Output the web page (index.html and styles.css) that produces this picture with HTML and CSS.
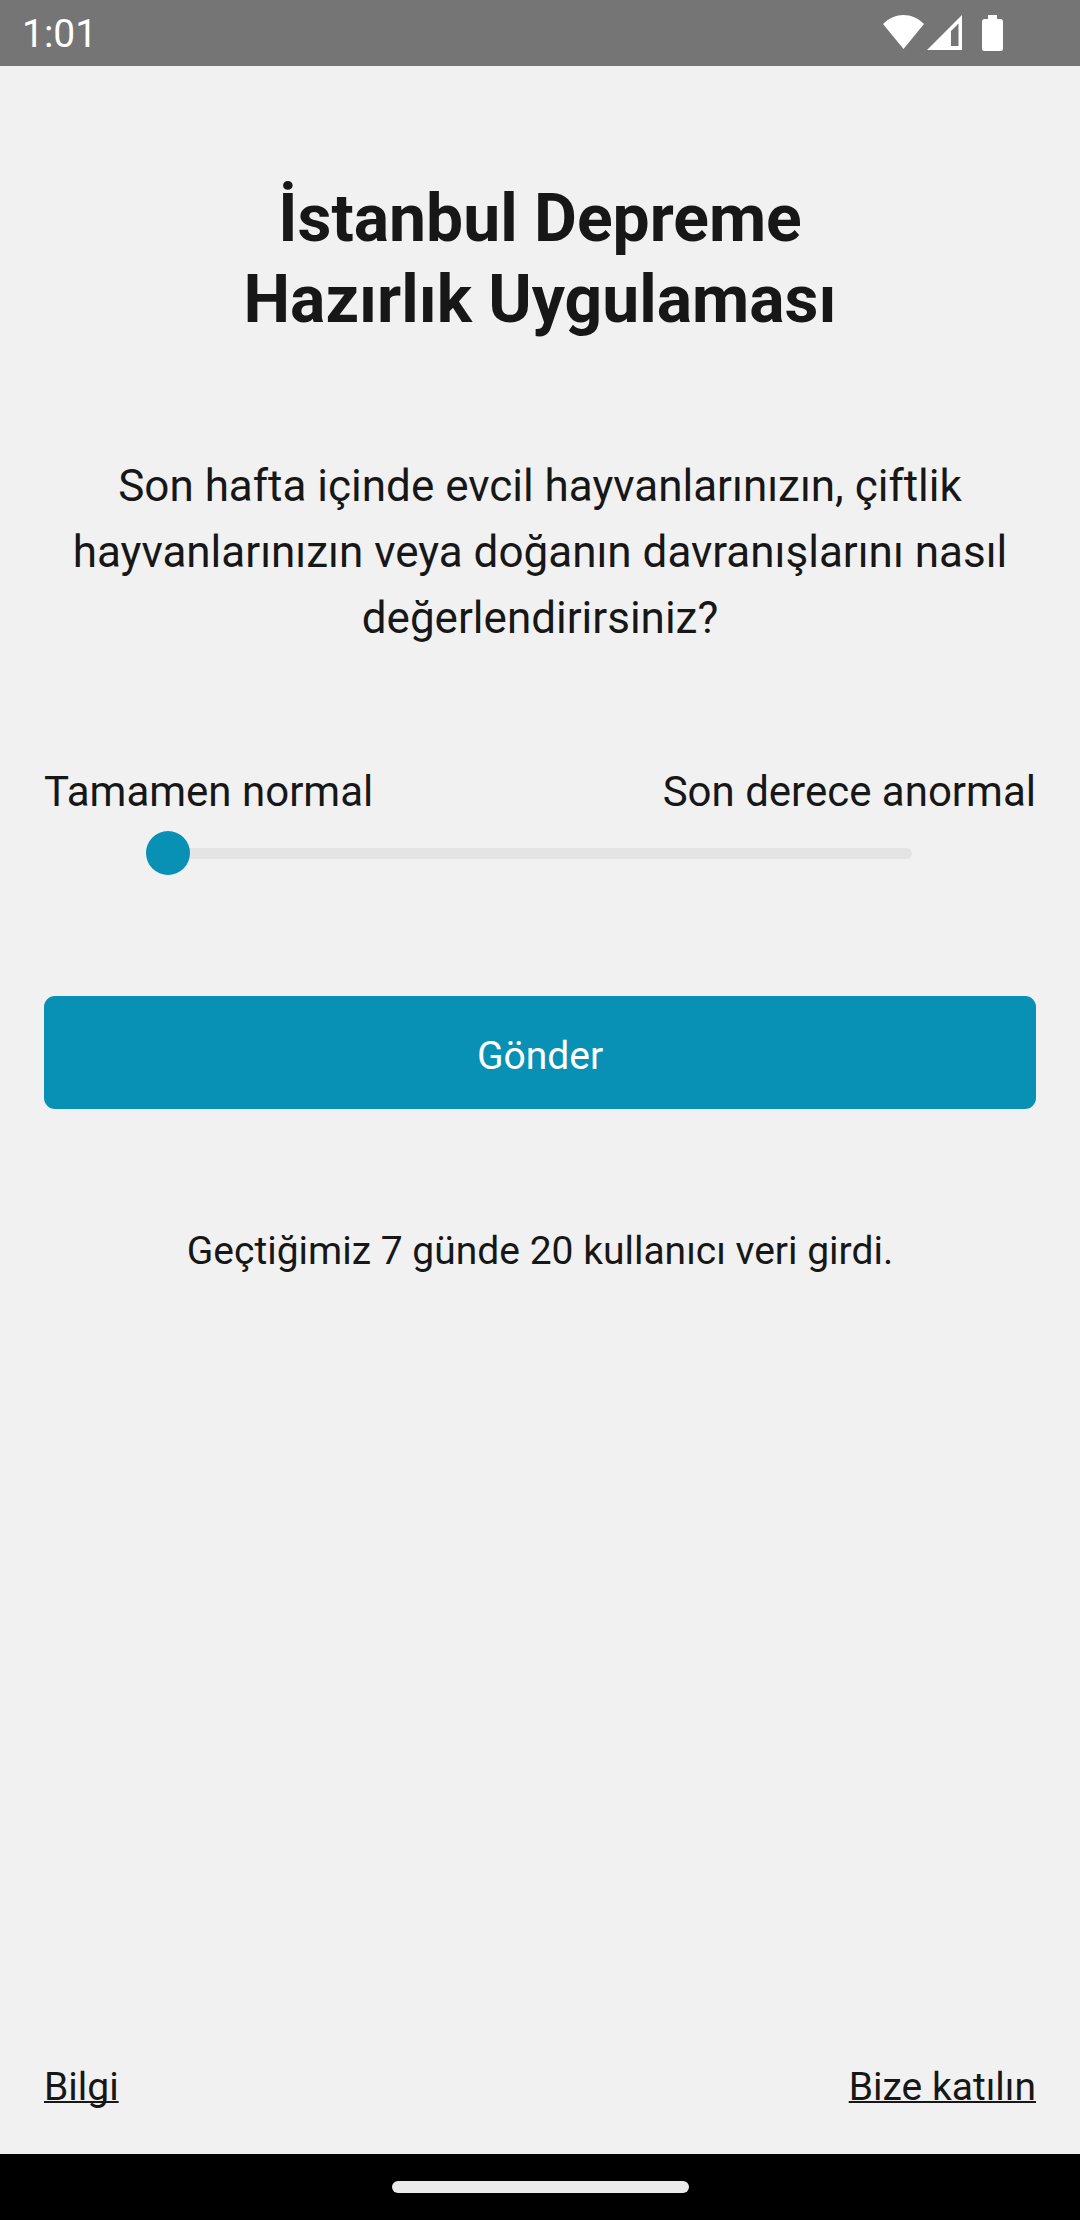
FILE: index.html
```html
<!DOCTYPE html>
<html lang="tr">
<head>
<meta charset="utf-8">
<meta name="viewport" content="width=device-width, initial-scale=1">
<title>İstanbul Depreme Hazırlık Uygulaması</title>
<link rel="stylesheet" href="styles.css">
</head>
<body>
<header class="status-bar">
  <span class="clock">1:01</span>
  <div class="status-icons">
    <svg class="wifi" viewBox="0 0 41 34" aria-hidden="true"><path d="M0 9C12-3 29-3 41 9L20.500 34Z"/></svg>
    <svg class="signal" viewBox="0 0 35 35" aria-hidden="true"><path fill-rule="evenodd" d="M35 0V35H0ZM31.500 8.500L24 16V31H31.500Z"/></svg>
    <svg class="battery" viewBox="0 0 21 36" aria-hidden="true"><path d="M6 0H15V4H18.500Q21 4 21 6.500V33.500Q21 36 18.500 36H2.500Q0 36 0 33.500V6.500Q0 4 2.500 4H6Z"/></svg>
  </div>
</header>
<main class="screen">
  <h1 class="title">İstanbul Depreme Hazırlık Uygulaması</h1>
  <form class="survey">
    <label class="question" for="rating">Son hafta içinde evcil hayvanlarınızın, çiftlik hayvanlarınızın veya doğanın davranışlarını nasıl değerlendirirsiniz?</label>
    <div class="scale-labels"><span>Tamamen normal</span><span>Son derece anormal</span></div>
    <input class="slider" id="rating" type="range" min="0" max="10" value="0">
    <button class="submit" type="button">Gönder</button>
  </form>
  <p class="summary">Geçtiğimiz 7 günde 20 kullanıcı veri girdi.</p>
  <footer class="links"><a href="#bilgi">Bilgi</a><a href="#katil">Bize katılın</a></footer>
</main>
<div class="nav-bar"><div class="nav-handle"></div></div>
</body>
</html>
```
FILE: styles.css
```css
* {
  box-sizing: border-box;
}

body {
  margin: 0;
  min-height: 100vh;
  display: flex;
  flex-direction: column;
  background: #f1f1f1;
  color: #171717;
  font-family: Roboto, sans-serif;
  font-size: 39px;
  line-height: 58px;
}

.status-bar {
  display: flex;
  align-items: center;
  justify-content: space-between;
  height: 66px;
  padding: 0 77px 0 22px;
  background: #757575;
  color: #fff;
}

.clock {
  padding-top: 2px;
}

.status-icons {
  display: flex;
  align-items: flex-start;
}

.status-icons svg {
  fill: #fff;
}

.wifi {
  width: 41px;
  height: 34px;
}

.signal {
  width: 35px;
  height: 35px;
  margin: 0 20px 0 3px;
}

.battery {
  width: 21px;
  height: 36px;
}

.screen {
  flex: 1;
  display: flex;
  flex-direction: column;
  padding: 112px 44px 38px;
}

.title {
  max-width: 720px;
  margin: 0 auto;
  font-size: 66px;
  font-weight: 700;
  line-height: 81px;
  text-align: center;
}

.survey {
  display: flex;
  flex-direction: column;
  margin-top: 113px;
}

.question {
  font-size: 44px;
  line-height: 66px;
  text-align: center;
}

.scale-labels {
  display: flex;
  justify-content: space-between;
  margin-top: 114px;
  font-size: 42px;
  line-height: 54px;
}

.slider {
  appearance: none;
  width: auto;
  height: 44px;
  margin: 12px 124px 0 102px;
  background: transparent;
}

.slider::-webkit-slider-runnable-track {
  height: 11px;
  border-radius: 6px;
  background: #e4e4e4;
}

.slider::-webkit-slider-thumb {
  appearance: none;
  width: 44px;
  height: 44px;
  margin-top: -17px;
  border-radius: 50%;
  background: #0891b5;
}

.submit {
  height: 113px;
  margin-top: 121px;
  padding: 6px 0 0;
  border: 0;
  border-radius: 11px;
  background: #0891b5;
  color: #fff;
  font: inherit;
}

.summary {
  margin: 113px 0 0;
  text-align: center;
}

.links {
  display: flex;
  justify-content: space-between;
  margin-top: auto;
}

.links a {
  color: inherit;
  text-decoration-thickness: 2px;
  text-decoration-skip-ink: none;
}

.nav-bar {
  display: flex;
  align-items: center;
  justify-content: center;
  height: 66px;
  background: #000;
}

.nav-handle {
  width: 297px;
  height: 12px;
  border-radius: 6px;
  background: #ebebeb;
}
```
